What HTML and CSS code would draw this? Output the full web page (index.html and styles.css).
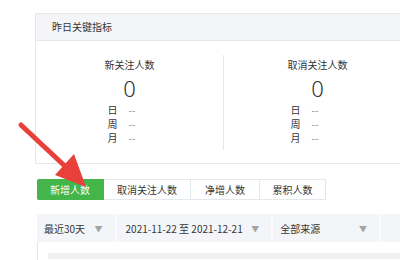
FILE: index.html
```html
<!DOCTYPE html>
<html lang="zh-CN">
<head>
    <meta charset="UTF-8">
    <title>用户分析</title>
    <link rel="stylesheet" href="styles.css">
</head>
<body>
    <div class="page">
        <!-- 昨日关键指标 -->
        <div class="card">
            <div class="card-head">昨日关键指标</div>
            <div class="card-body">
                <div class="metric">
                    <div class="metric-inner">
                        <div class="metric-title">新关注人数</div>
                        <div class="metric-num">0</div>
                        <div class="metric-row"><span class="row-label">日</span><span class="row-val">--</span></div>
                        <div class="metric-row"><span class="row-label">周</span><span class="row-val">--</span></div>
                        <div class="metric-row"><span class="row-label">月</span><span class="row-val">--</span></div>
                    </div>
                </div>
                <div class="metric">
                    <div class="metric-inner">
                        <div class="metric-title">取消关注人数</div>
                        <div class="metric-num">0</div>
                        <div class="metric-row"><span class="row-label">日</span><span class="row-val">--</span></div>
                        <div class="metric-row"><span class="row-label">周</span><span class="row-val">--</span></div>
                        <div class="metric-row"><span class="row-label">月</span><span class="row-val">--</span></div>
                    </div>
                </div>
            </div>
        </div>

        <!-- 切换 -->
        <div class="tabs">
            <span class="tab active">新增人数</span>
            <span class="tab">取消关注人数</span>
            <span class="tab">净增人数</span>
            <span class="tab">累积人数</span>
        </div>

        <!-- 筛选 -->
        <div class="filter">
            <div class="filter-item w-range"><span>最近30天</span><span class="caret">▼</span></div>
            <div class="filter-item w-date"><span>2021-11-22 至 2021-12-21</span><span class="caret">▼</span></div>
            <div class="filter-item w-source"><span>全部来源</span><span class="caret">▼</span></div>
            <div class="filter-item w-rest"></div>
        </div>

        <div class="chart">
            <div class="chart-bar"></div>
        </div>
    </div>

    <svg class="arrow" width="100" height="200" viewBox="0 0 100 200">
        <line x1="21" y1="125" x2="68" y2="169" stroke="#e8403a" stroke-width="5" stroke-linecap="round"/>
        <polygon points="86,187 55,175 74,154" fill="#e8403a"/>
    </svg>
</body>
</html>
```

FILE: styles.css
```css
body {
    margin: 0;
    width: 400px;
    height: 260px;
    overflow: hidden;
    background: #fff;
    font-family: "Noto Sans CJK SC", "Noto Sans", sans-serif;
    color: #353535;
}

.page {
    box-sizing: border-box;
    width: 400px;
    height: 260px;
    padding: 13px 0 0 35px;
    overflow: hidden;
}

.card {
    border: 1px solid #e7e7eb;
    border-right: none;
}

.card-head {
    height: 26px;
    line-height: 26px;
    padding-left: 16px;
    font-size: 10px;
    background: #f4f5f9;
    border-bottom: 1px solid #e7e7eb;
}

.card-body {
    display: flex;
    padding: 14px 0 13px;
}

.metric {
    height: 95px;
    text-align: center;
}

.metric:first-child {
    width: 187px;
}

.metric + .metric {
    flex: 1;
    padding-left: 11px;
    border-left: 1px solid #e7e7eb;
}

.metric-inner {
    display: inline-block;
    text-align: left;
    padding-top: 2px;
}

.metric-title {
    font-size: 10px;
    line-height: 16px;
    text-align: center;
}

.metric-num {
    font-family: "Noto Sans", sans-serif;
    font-size: 22px;
    line-height: 30px;
    font-weight: 300;
    text-align: center;
    color: #333;
}

.metric-row {
    font-size: 10px;
    line-height: 14px;
    padding-left: 3px;
}

.row-label {
    display: inline-block;
    width: 21px;
}

.row-val {
    color: #888;
}

.tabs {
    display: flex;
    margin: 15px 0 0 2px;
}

.tab {
    height: 19px;
    line-height: 19px;
    font-size: 10px;
    text-align: center;
    border: 1px solid #e4e8eb;
    border-left: none;
    background: #fff;
}

.tab:nth-child(1) { width: 66px; }
.tab:nth-child(2) { width: 86px; }
.tab:nth-child(3) { width: 68px; }
.tab:nth-child(4) { width: 65px; }

.tab.active {
    background: #44b549;
    border-color: #44b549;
    color: #fff;
    border-radius: 2px 0 0 2px;
}

.filter {
    display: flex;
    margin: 14px 0 0 2px;
    height: 28px;
    background: #f4f5f9;
}

.filter-item {
    display: flex;
    align-items: center;
    justify-content: space-between;
    padding: 0 12px 0 7px;
    font-size: 10px;
    border-right: 2px solid #fbfbfd;
}

.w-range { width: 60px; }
.w-date { width: 137px; padding-left: 9px; }
.w-source { width: 89px; padding-left: 7px; }
.w-rest { flex: 1; border-right: none; }

.caret {
    font-size: 8px;
    color: #a3a3a3;
}

.chart {
    margin-left: 2px;
    height: 17px;
    border-left: 1px solid #e7e7eb;
    padding: 11px 0 0 10px;
}

.chart-bar {
    height: 6px;
    background: #f0f1f5;
}

.arrow {
    position: absolute;
    left: 0;
    top: 0;
}
```
